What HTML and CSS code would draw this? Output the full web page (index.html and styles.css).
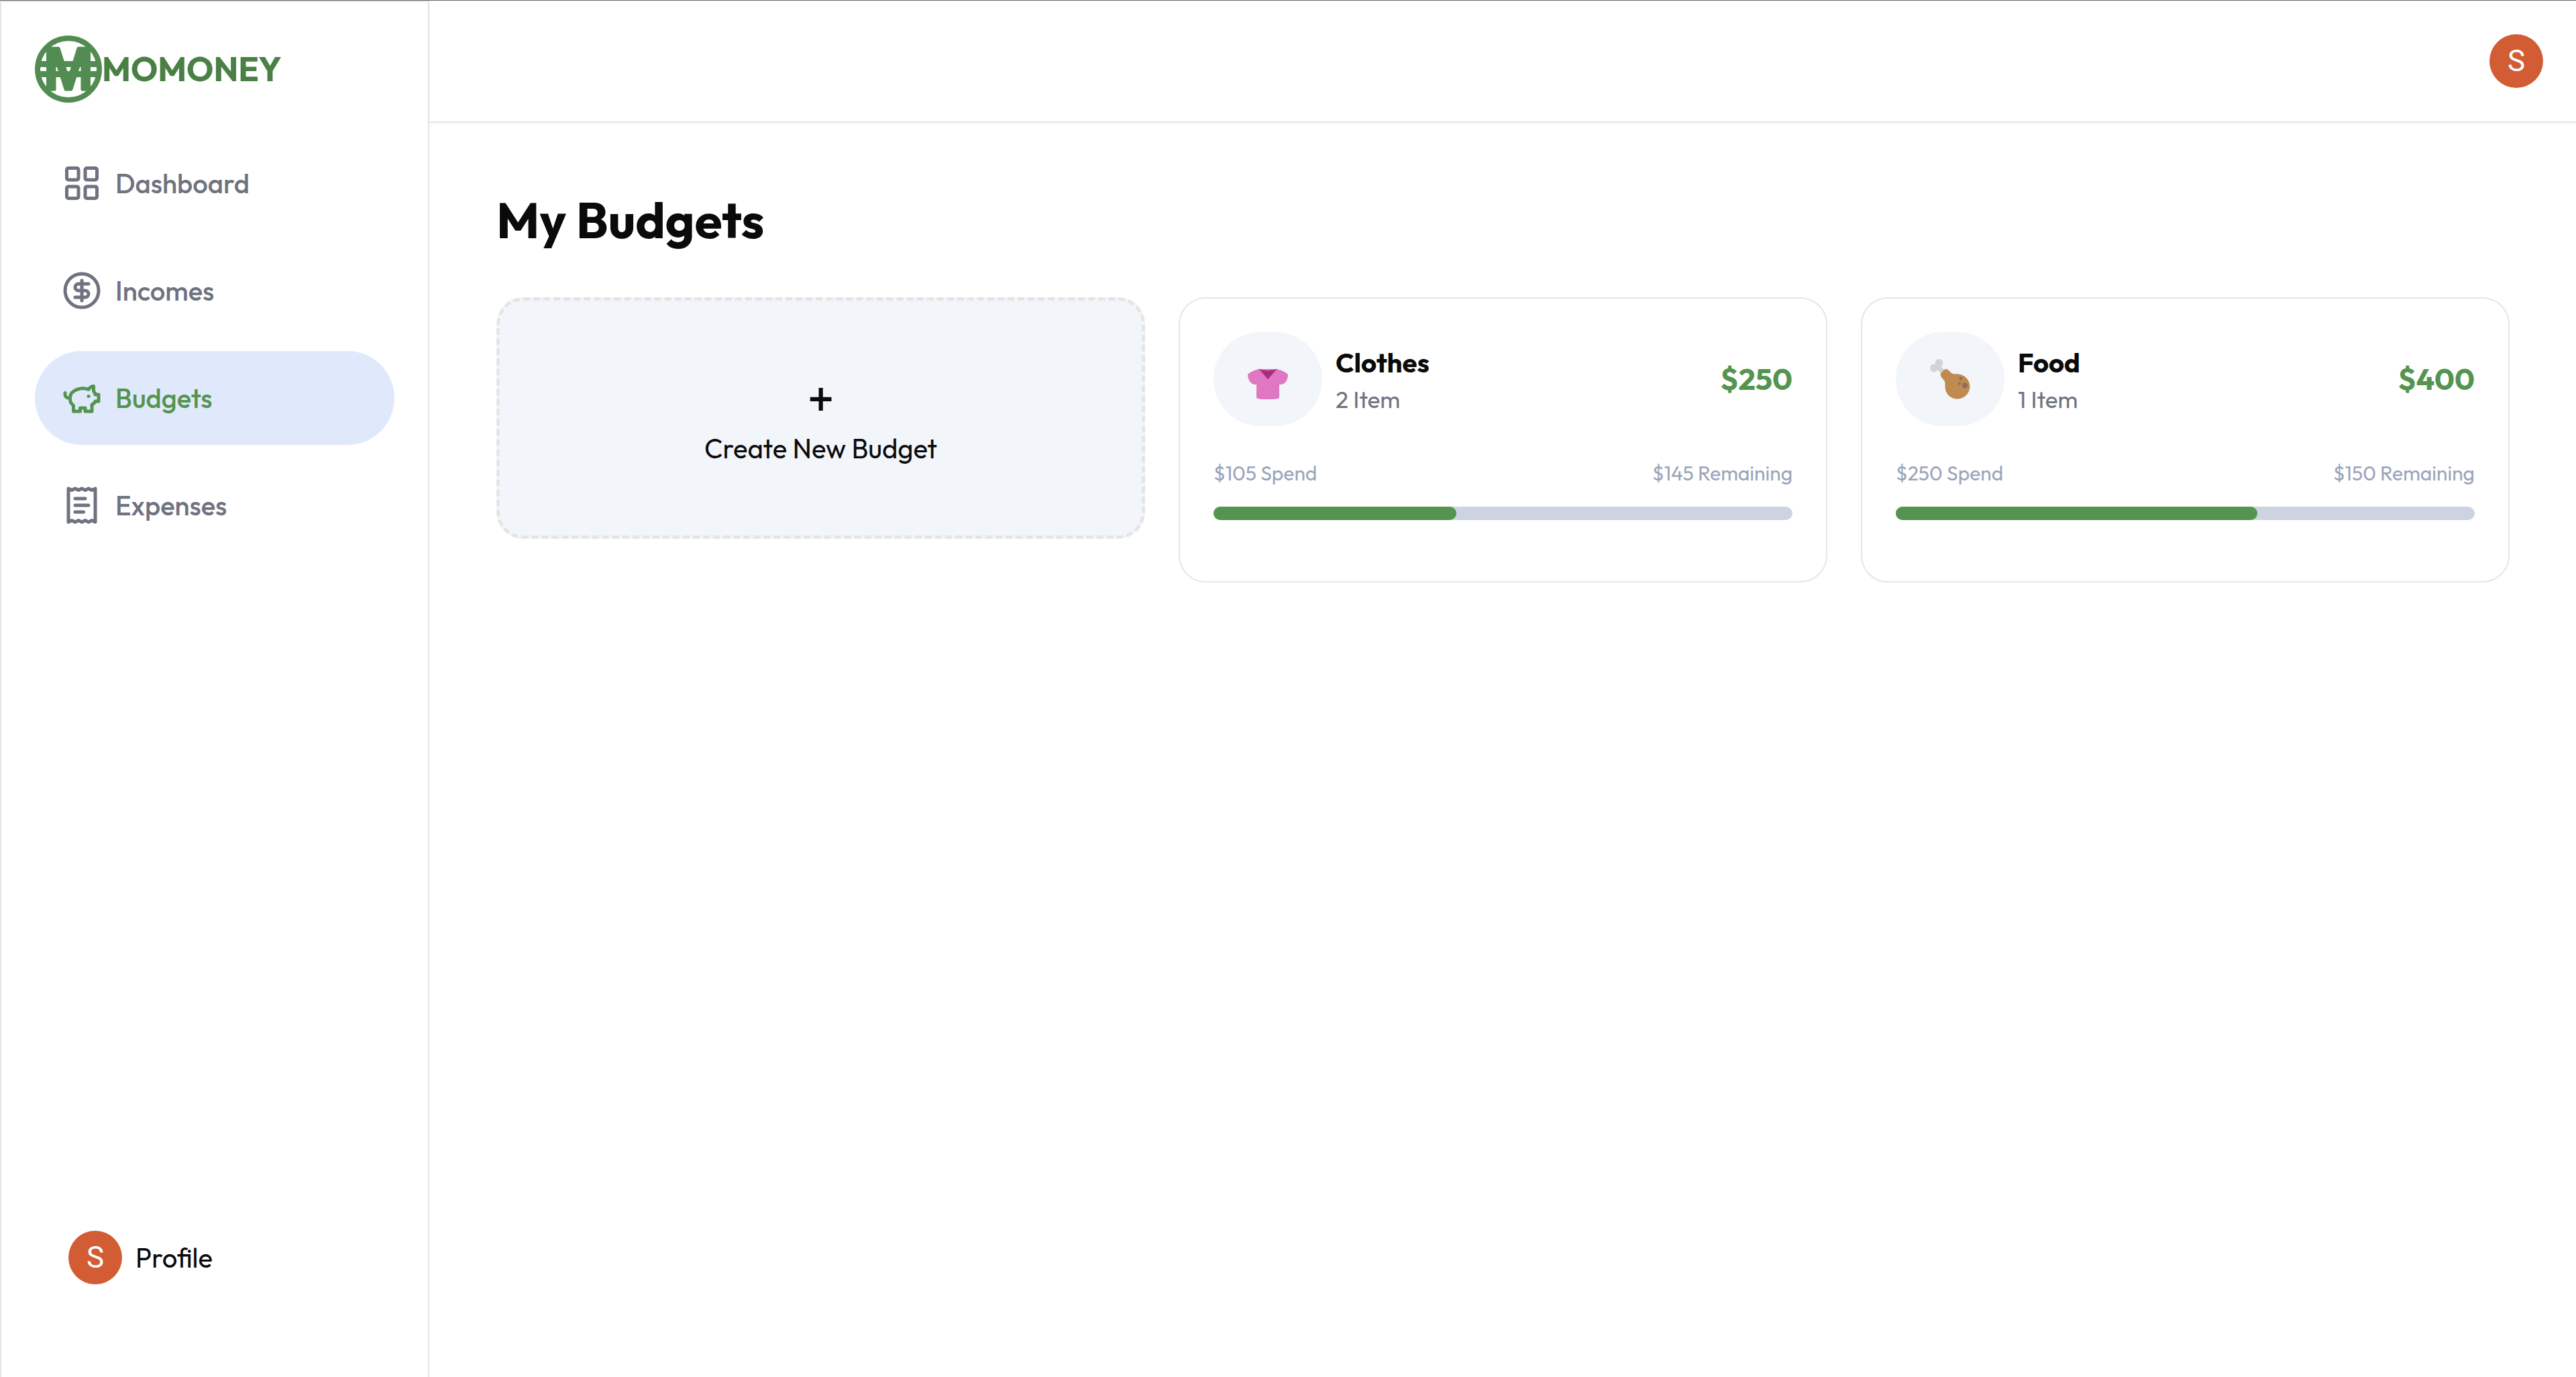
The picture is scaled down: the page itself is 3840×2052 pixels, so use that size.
FILE: index.html
```html
<!DOCTYPE html>
<html lang="en">
<head>
    <meta charset="UTF-8">
    <meta name="viewport" content="width=device-width, initial-scale=1.0">
    <title>MoMoney - Budgets</title>
    <link rel="stylesheet" href="styles.css">
</head>
<body>
    <aside class="sidebar">
        <a class="logo" href="#">
            <svg class="logo-mark" viewBox="0 0 100 100" aria-hidden="true">
                <circle cx="50" cy="50" r="46"/>
                <path d="M6 42.5h88M6 57.5h88"/>
                <text x="50" y="81" text-anchor="middle">M</text>
            </svg>
            <span>MOMONEY</span>
        </a>
        <nav class="menu">
            <a href="#">
                <svg class="icon" viewBox="0 0 24 24"><rect x="3" y="3" width="7" height="7" rx="1"/><rect x="14" y="3" width="7" height="7" rx="1"/><rect x="14" y="14" width="7" height="7" rx="1"/><rect x="3" y="14" width="7" height="7" rx="1"/></svg>
                Dashboard
            </a>
            <a href="#">
                <svg class="icon" viewBox="0 0 24 24"><circle cx="12" cy="12" r="10"/><path d="M16 8h-6a2 2 0 1 0 0 4h4a2 2 0 1 1 0 4H8"/><path d="M12 18V6"/></svg>
                Incomes
            </a>
            <a class="active" href="#">
                <svg class="icon" viewBox="0 0 24 24"><path d="M19 5c-1.5 0-2.8 1.4-3 2-3.5-1.5-11-.3-11 5 0 1.8 0 3 2 4.5V20h4v-2h3v2h4v-4c1-.5 1.7-1 2-2h2v-4h-2c0-1-.5-1.5-1-2V5z"/><path d="M2 9v1c0 1.1.9 2 2 2h1"/><path d="M16 11h.01"/></svg>
                Budgets
            </a>
            <a href="#">
                <svg class="icon" viewBox="0 0 24 24"><path d="M4 2v20l2-1 2 1 2-1 2 1 2-1 2 1 2-1 2 1V2l-2 1-2-1-2 1-2-1-2 1-2-1-2 1Z"/><path d="M14 8H8"/><path d="M16 12H8"/><path d="M13 16H8"/></svg>
                Expenses
            </a>
        </nav>
        <div class="profile">
            <button class="avatar" type="button" aria-label="Open profile">S</button>
            <span>Profile</span>
        </div>
    </aside>

    <div class="page">
        <header class="header">
            <button class="avatar" type="button" aria-label="Open user menu">S</button>
        </header>
        <main class="content">
            <h1>My Budgets</h1>
            <div class="budgets">
                <button class="new-budget" type="button">
                    <span class="plus">+</span>
                    <span>Create New Budget</span>
                </button>

                <a class="budget" href="#">
                    <div class="budget-top">
                        <div class="emoji">
                            <svg viewBox="0 0 60 60" aria-hidden="true">
                                <path fill="#e077c3" d="M17 15h26c6 1 12 4 16 7 1 1 1 2 1 3-1 7-5 13-11 13h-2v20c-3 3-31 3-34 0V38h-2C5 38 1 32 0 25c0-1 0-2 1-3 4-3 10-6 16-7z"/>
                                <path fill="#9e3278" stroke="#d63190" d="M17 15c8 3 18 3 26 0L30 30z"/>
                            </svg>
                        </div>
                        <div class="info">
                            <h2>Clothes</h2>
                            <p>2 Item</p>
                        </div>
                        <div class="amount">$250</div>
                    </div>
                    <div class="budget-text">
                        <span>$105 Spend</span>
                        <span>$145 Remaining</span>
                    </div>
                    <div class="bar"><div class="bar-fill" style="width: 42%"></div></div>
                </a>

                <a class="budget" href="#">
                    <div class="budget-top">
                        <div class="emoji">
                            <svg viewBox="0 0 60 60" aria-hidden="true">
                                <path stroke="#d3d3d3" stroke-width="7" d="M10 10l12 12"/>
                                <circle cx="13.5" cy="6" r="6" fill="#d3d3d3"/>
                                <circle cx="6" cy="13.5" r="6" fill="#d3d3d3"/>
                                <path fill="#bf8b4e" d="M17 20l3-3c3-3 6-2 8 0 3 3 4 5 9 5.500c12-2 22.500 7 22.500 18.500C59.500 51 51 59.500 41 59.500S22.500 52 22.500 41c0-5 1-7-3-11-4-4-5-7-2.500-10z"/>
                                <g fill="#976b58"><circle cx="46" cy="29" r="2.500"/><circle cx="44" cy="36.500" r="2"/><circle cx="52" cy="39.500" r="4.200"/></g>
                            </svg>
                        </div>
                        <div class="info">
                            <h2>Food</h2>
                            <p>1 Item</p>
                        </div>
                        <div class="amount">$400</div>
                    </div>
                    <div class="budget-text">
                        <span>$250 Spend</span>
                        <span>$150 Remaining</span>
                    </div>
                    <div class="bar"><div class="bar-fill" style="width: 62.5%"></div></div>
                </a>
            </div>
        </main>
    </div>
</body>
</html>
```
FILE: styles.css
```css
* { box-sizing: border-box; }
body { display: flex; min-height: 100vh; margin: 0; border-top: 1px solid #666; background: #fff; color: #0a0a0a; font-family: Outfit, Lato, sans-serif; font-size: 40px; line-height: 60px; }
h1, h2, p { margin: 0; }
a { color: inherit; text-decoration: none; }
button { padding: 0; border: none; color: inherit; font: inherit; cursor: pointer; }

/* sidebar */
.sidebar { display: flex; flex-direction: column; flex-shrink: 0; width: 640px; padding: 50px; border: 2px solid #e5e5e5; border-bottom: none; }
.logo { display: flex; align-items: center; color: #4a8046; font-size: 50px; font-weight: 700; }
.logo-mark { width: 100px; height: 100px; fill: none; stroke: #528c52; }
.logo-mark circle { stroke-width: 8; }
.logo-mark path { stroke-width: 9; }
.logo-mark text { fill: #528c52; stroke-width: 3; stroke-linejoin: bevel; font-family: "Liberation Sans", sans-serif; font-size: 90px; font-weight: bold; }
.menu { display: flex; flex-direction: column; gap: 20px; margin-top: 50px; }
.menu a { display: flex; align-items: center; gap: 20px; padding: 40px; border-radius: 70px; color: #6f7280; font-weight: 500; }
.menu .active { background: #e0e9fc; color: #559450; }
.icon { width: 60px; height: 60px; fill: none; stroke: currentColor; stroke-width: 2; stroke-linecap: round; stroke-linejoin: round; }
.profile { display: flex; align-items: center; gap: 20px; margin-top: auto; padding: 50px 50px 88px; }
.avatar { width: 80px; height: 80px; border-radius: 50%; background: #d25c33; color: #fff; font-family: Roboto, sans-serif; font-size: 44px; }

/* header */
.page { flex: 1; min-width: 0; }
.header { display: flex; justify-content: flex-end; padding: 50px 49px 50px 50px; border-bottom: 2px solid #e5e5e5; box-shadow: 0 2px 5px rgba(0, 0, 0, 0.03); }

/* budgets */
.content { padding: 100px 99px 100px 100px; }
h1 { font-size: 75px; line-height: 90px; }
.budgets { display: grid; grid-template-columns: repeat(3, 1fr); align-items: start; gap: 50px; margin-top: 70px; }
.new-budget { display: flex; flex-direction: column; align-items: center; padding: 100px; border: 5px dashed #e5e5e5; border-radius: 40px; background: #f2f5fa; }
.plus { font-size: 75px; line-height: 90px; }
.budget { padding: 50px 50px 91px; border: 2px solid #e5e5e5; border-radius: 40px; }
.budget-top { display: flex; align-items: center; gap: 20px; }
.emoji { display: flex; padding: 40px 51px; border-radius: 70px; background: #f2f5fa; }
.emoji svg { width: 60px; height: 60px; }
.info h2 { font-size: 40px; line-height: 60px; }
.info p { color: #6f7280; font-size: 35px; line-height: 50px; }
.amount { margin-left: auto; color: #559450; font-size: 45px; font-weight: 700; }
.budget-text { display: flex; justify-content: space-between; margin: 50px 0 30px; color: #9aa5bb; font-size: 30px; line-height: 40px; }
.bar { height: 20px; border-radius: 10px; background: #cdd3e0; }
.bar-fill { height: 20px; border-radius: 10px; background: #559450; }
```
